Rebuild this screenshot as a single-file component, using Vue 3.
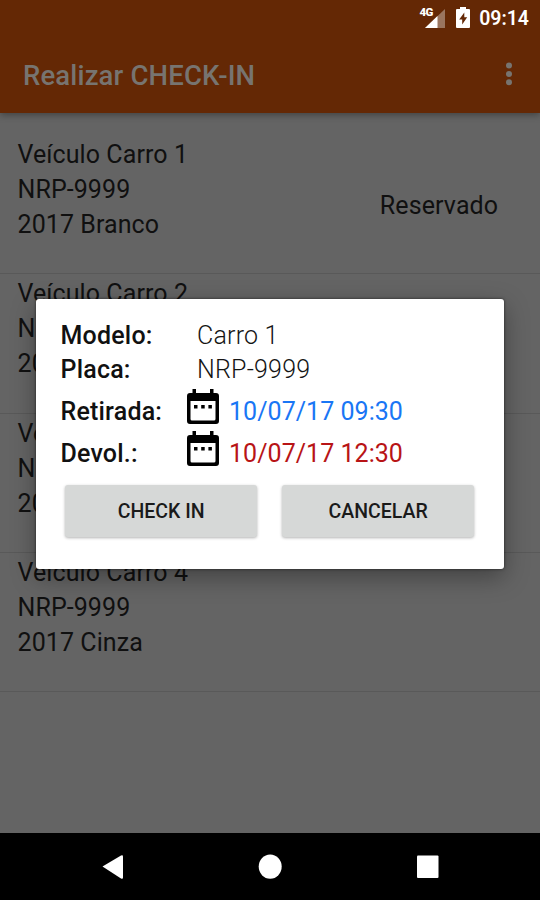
<script setup>
const vehicles = [
  { name: 'Veículo Carro 1', plate: 'NRP-9999', detail: '2017 Branco', status: 'Reservado' },
  { name: 'Veículo Carro 2', plate: 'NRP-9999', detail: '2017 Preto', status: '' },
  { name: 'Veículo Carro 3', plate: 'NRP-9999', detail: '2017 Prata', status: '' },
  { name: 'Veículo Carro 4', plate: 'NRP-9999', detail: '2017 Cinza', status: '' },
]
const dates = [
  { label: 'Retirada:', value: '10/07/17 09:30', tone: 'blue' },
  { label: 'Devol.:', value: '10/07/17 12:30', tone: 'red' },
]
</script>

<template>
  <div class="screen">
    <header class="top">
      <div class="status">
        <svg class="signal" width="28" height="24" viewBox="0 0 28 24">
          <path d="M26 3V22H6Z" fill="#9a755f" />
          <path d="M18.500 10V22H6Z" fill="#fff" />
          <rect x="0" y="0" width="14" height="12" fill="#642805" />
          <text x="0.500" y="10" class="net">4G</text>
        </svg>
        <svg class="battery" width="14" height="21" viewBox="0 0 14 21">
          <path d="M4 0h6v2h3q1 0 1 1v17q0 1-1 1H1q-1 0-1-1V3q0-1 1-1h3z" fill="#fff" />
          <path d="M8.300 5.500 3.200 12.600h3v5l5-7.300H8.300z" fill="#642805" />
        </svg>
        <span class="clock">09:14</span>
      </div>
      <div class="bar">
        <h1>Realizar CHECK-IN</h1>
        <svg width="8" height="26" viewBox="0 0 8 26" fill="#777470">
          <circle cx="4" cy="3.500" r="3" /><circle cx="4" cy="12" r="3" /><circle cx="4" cy="20.300" r="3" />
        </svg>
      </div>
    </header>

    <main class="list">
      <div v-for="v in vehicles" :key="v.name" class="row">
        <div class="info">
          <div>{{ v.name }}</div>
          <div>{{ v.plate }}</div>
          <div>{{ v.detail }}</div>
        </div>
        <div class="state">{{ v.status }}</div>
      </div>
    </main>

    <nav class="nav">
      <svg width="540" height="67" viewBox="0 0 540 67" fill="#fff">
        <path d="M102.500 33.500 121 22.500q2-1 2 1V44.500q0 2-2 1z" />
        <ellipse cx="270.200" cy="33.600" rx="11.500" ry="12.200" />
        <rect x="417" y="22.500" width="21.500" height="22.500" rx="1" />
      </svg>
    </nav>

    <section class="dialog">
      <div class="field"><b>Modelo:</b><span>Carro 1</span></div>
      <div class="field"><b>Placa:</b><span>NRP-9999</span></div>
      <div v-for="d in dates" :key="d.label" class="date">
        <b>{{ d.label }}</b>
        <svg width="32" height="36" viewBox="0 0 32 36">
          <path d="M5.500 0h3.500v4h14V0h3.500v4H29q3 0 3 3v25q0 3-3 3H3q-3 0-3-3V7q0-3 3-3h2.500zM3.500 12v18q0 1.500 1.500 1.500h22q1.500 0 1.500-1.500V12z" fill="#000" fill-rule="evenodd" />
          <path d="M7 16h3.500v3.500H7zM14.200 16h3.500v3.500h-3.500zM21.400 16h3.500v3.500h-3.500z" />
        </svg>
        <span :class="d.tone">{{ d.value }}</span>
      </div>
      <div class="actions">
        <button>CHECK IN</button>
        <button>CANCELAR</button>
      </div>
    </section>
  </div>
</template>

<style>
body { margin: 0; }
</style>
<style scoped>
.screen {
  position: relative;
  width: 540px;
  height: 900px;
  overflow: hidden;
  display: flex;
  flex-direction: column;
  background: #646464;
  font-family: Roboto, sans-serif;
  color: #101010;
}
.top {
  box-sizing: border-box;
  height: 113px;
  flex: none;
  background: #642805;
  box-shadow: 0 2px 7px rgba(0, 0, 0, .35);
}
.status {
  height: 36px;
  display: flex;
  justify-content: flex-end;
  align-items: center;
  padding-right: 11px;
  color: #fff;
}
.signal { margin: -1px 9px 0 0; }
.battery { margin-right: 9.500px; margin-top: -1px; }
.net { font: 900 11.500px Roboto, sans-serif; letter-spacing: -.700px; fill: #fff; }
.clock { font-size: 19.500px; font-weight: 600; line-height: 38px; padding-top: 1px; }
.bar {
  height: 77px;
  display: flex;
  align-items: center;
  justify-content: space-between;
  padding: 0 27px 0 23px;
}
h1 { margin: 0; padding-top: 2px; font-size: 27.500px; font-weight: 500; line-height: 77px; letter-spacing: .150px; color: #777470; }
.list { flex: 1; padding-top: 21px; }
.row {
  box-sizing: border-box;
  height: 139.330px;
  display: flex;
  position: relative;
}
.row::after {
  content: '';
  position: absolute;
  left: 0;
  right: 0;
  bottom: -1px;
  height: 1px;
  background: #595959;
}
.info { width: 338.500px; padding: 3px 0 0 17.500px; font-size: 25px; line-height: 35px; letter-spacing: .080px; }
.state { width: 166px; text-align: center; font-size: 25px; line-height: 143px; letter-spacing: .100px; }
.nav { height: 67px; flex: none; background: #000; }
.nav svg { display: block; }
.dialog {
  position: absolute;
  left: 36px;
  top: 299px;
  box-sizing: border-box;
  width: 468px;
  height: 269.500px;
  padding: 18px 29px 0 24.500px;
  border-radius: 3px;
  background: #fff;
  box-shadow: 0 0 3px rgba(0, 0, 0, .6), 0 8px 24px rgba(0, 0, 0, .35);
  font-size: 25px;
  color: #151515;
}
.field span { font-weight: 350; letter-spacing: .200px; }
.dialog b { font-weight: 500; color: #111; letter-spacing: .200px; }
.field { display: grid; grid-template-columns: 136.500px 1fr; line-height: 35px; }
.field:first-child { line-height: 37px; height: 35px; }
.date { display: grid; grid-template-columns: 126.500px 42px 1fr; height: 42px; line-height: 50px; letter-spacing: .040px; }
.date svg { margin-top: 1.500px; }
.blue { color: #1976f5; }
.red { color: #b81416; }
.actions { display: flex; gap: 25px; padding: 14px 0 0 4.700px; }
button {
  width: 192px;
  height: 52px;
  padding: 0;
  border: 0;
  border-radius: 3px;
  background: #d6d8d7;
  box-shadow: 0 1px 3px rgba(0, 0, 0, .3);
  font: 500 19.500px Roboto, sans-serif;
  color: #1a1a1a;
}
</style>
